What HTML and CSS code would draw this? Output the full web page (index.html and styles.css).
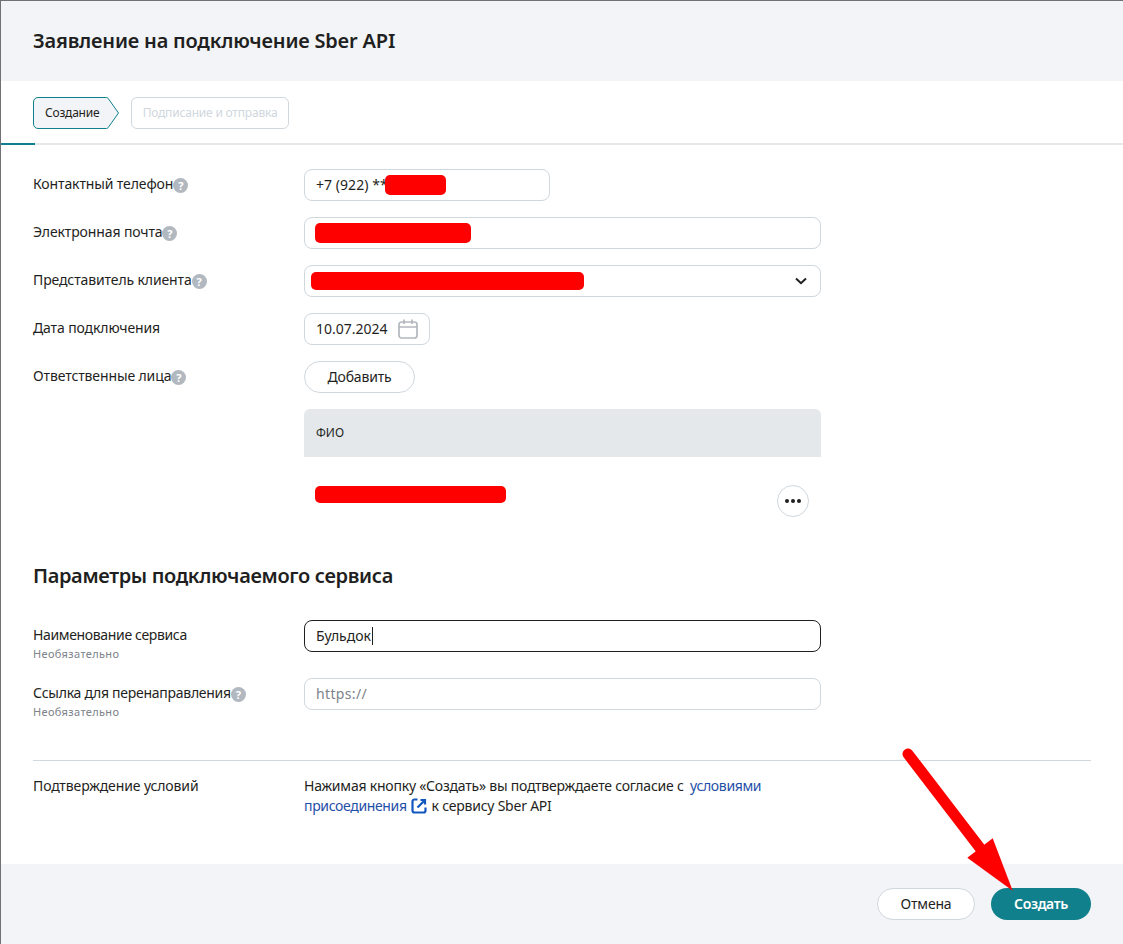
FILE: index.html
```html
<!DOCTYPE html>
<html lang="ru">
<head>
<meta charset="utf-8">
<title>Заявление на подключение Sber API</title>
<link rel="stylesheet" href="styles.css">
</head>
<body>
<div class="modal">
  <header class="head"><h1 class="title">Заявление на подключение Sber API</h1></header>
  <div class="tabs">
    <div class="step-active">
      <svg class="step-shape" width="87" height="32" viewBox="0 0 87 32"><path d="M5 .5H73.500a2 2 0 0 1 1.500.7L85.500 16 75 30.800a2 2 0 0 1-1.500.7H5A4.500 4.500 0 0 1 .5 27V5A4.500 4.500 0 0 1 5 .5Z" fill="#f2f4f7" stroke="#10808c"/></svg>
      <span class="step-text">Создание</span>
    </div>
    <div class="step-next">Подписание и отправка</div>
  </div>
  <main class="form">
    <div class="row">
      <div class="label">Контактный телефон<span class="hint">?</span></div>
      <div class="field w246"><span class="val phone">+7 (922) **</span><span class="blot b-phone"></span></div>
    </div>
    <div class="row">
      <div class="label">Электронная почта<span class="hint">?</span></div>
      <div class="field w517"><span class="blot b-mail"></span></div>
    </div>
    <div class="row">
      <div class="label">Представитель клиента<span class="hint">?</span></div>
      <div class="field w517 sel"><span class="blot b-rep"></span>
        <svg class="chev" width="12" height="8" viewBox="0 0 12 8"><path d="M1 1.500 6 6.200 11 1.500" fill="none" stroke="#1f1f22" stroke-width="2"/></svg>
      </div>
    </div>
    <div class="row">
      <div class="label">Дата подключения</div>
      <div class="field w126"><span class="val">10.07.2024</span>
        <svg class="cal" width="20" height="20" viewBox="0 0 20 20" fill="none" stroke="#b2b8bf" stroke-width="1.700"><rect x="1" y="3" width="18" height="16" rx="2.500"/><path d="M1 8H19M6 .5V5M14 .5V5"/></svg>
      </div>
    </div>
    <div class="row">
      <div class="label">Ответственные лица<span class="hint">?</span></div>
      <button class="btn add">Добавить</button>
    </div>
    <div class="table">
      <div class="thead">ФИО</div>
      <div class="trow"><span class="blot b-name"></span>
        <span class="more"><i></i><i></i><i></i></span>
      </div>
    </div>
    <h2 class="section">Параметры подключаемого сервиса</h2>
    <div class="row">
      <div class="label"><span class="narrow">Наименование сервиса</span><div class="opt">Необязательно</div></div>
      <div class="field w517 focus"><span class="val">Бульдок</span><span class="caret"></span></div>
    </div>
    <div class="row">
      <div class="label"><span class="tight">Ссылка для перенаправления</span><span class="hint">?</span><div class="opt">Необязательно</div></div>
      <div class="field w517"><span class="ph">https://</span></div>
    </div>
    <div class="terms">
      <div class="label">Подтверждение условий</div>
      <p class="terms-text">Нажимая кнопку «Создать» вы подтверждаете согласие с <a class="link first">условиями</a> <a class="link">присоединения</a> <svg class="ext" width="16" height="16" viewBox="0 0 16 16" fill="none" stroke="#1358bf" stroke-width="2.200"><path d="M6.500 1.500H3.500A2 2 0 0 0 1.500 3.500V12.500A2 2 0 0 0 3.500 14.500H12.500A2 2 0 0 0 14.500 12.500V9.500"/><path d="M9.500 2H14V6.500M13.800 2.200 6.500 9.500"/></svg> к сервису Sber API</p>
    </div>
  </main>
  <footer class="foot">
    <button class="btn cancel">Отмена</button>
    <button class="btn create">Создать</button>
  </footer>
</div>
<svg class="arrow" width="125" height="150" viewBox="0 0 125 150"><path d="M8 6 80 100" stroke="#f00" stroke-width="11" stroke-linecap="round" fill="none"/><path d="M67.300 109.700 92.700 90.300 112.700 142.700Z" fill="#f00"/></svg>
</body>
</html>
```
FILE: styles.css
```css
* { box-sizing: border-box; }
html, body { margin: 0; padding: 0; }
body {
  position: relative;
  width: 1123px;
  height: 944px;
  overflow: hidden;
  background: #6f7173;
  padding: 1px 0 0 1px;
  font-family: "Noto Sans", "Liberation Sans", sans-serif;
  font-size: 14px;
  color: #1f1f22;
}
.modal { display: flex; flex-direction: column; height: 943px; background: #fff; }
.head { height: 80px; background: #f2f4f7; padding: 0 32px; display: flex; align-items: center; }
.title { margin: 0; font-size: 20px; font-weight: 600; line-height: 28px; letter-spacing: -.2px; color: #1f1f22; }
.tabs {
  height: 64px; padding: 16px 32px 0; display: flex; gap: 11px;
  border-bottom: 2px solid #e4e8eb; position: relative;
}
.tabs::after { content: ""; position: absolute; left: 0; bottom: -2px; width: 34px; height: 2px; background: #10808c; }
.step-active { position: relative; width: 87px; height: 32px; display: flex; align-items: center; padding-left: 12px; }
.step-shape { position: absolute; left: 0; top: 0; }
.step-text { position: relative; font-size: 12px; line-height: 16px; letter-spacing: -.2px; }
.step-next {
  width: 158px; height: 32px; border: 1px solid #d0d7dd; border-radius: 6px;
  font-size: 12px; line-height: 30px; text-align: center; color: #d0d7dd; letter-spacing: -.2px;
}
.form { flex: 1; padding: 24px 32px 0; }
.row { display: flex; align-items: flex-start; margin-bottom: 16px; }
.label { width: 271px; flex: none; line-height: 20px; padding-top: 5px; color: #1f1f22; letter-spacing: -.12px; }
.narrow { letter-spacing: -.35px; }
.tight { letter-spacing: -.27px; }
.hint {
  display: inline-block; width: 15px; height: 15px; border-radius: 50%; background: #b2b8bf; color: #fff;
  font-size: 11px; font-weight: 700; line-height: 15px; text-align: center; vertical-align: -1px; letter-spacing: 0;
}
.opt { font-size: 11px; line-height: 16px; color: #7d838a; margin-top: 1px; letter-spacing: .35px; }
.field {
  height: 32px; border: 1px solid #d0d7dd; border-radius: 8px; background: #fff;
  display: flex; align-items: center; padding-left: 11px; position: relative;
}
.w246 { width: 246px; }
.w517 { width: 517px; }
.w126 { width: 126px; justify-content: space-between; padding-right: 11px; }
.val { line-height: 20px; white-space: pre; }
.phone { letter-spacing: .05px; }
.ph { color: #7d838a; letter-spacing: .35px; margin-bottom: 2px; }
.blot { display: inline-block; background: #f00; border-radius: 5px; height: 20px; }
.b-phone { width: 61px; margin-left: -3px; }
.b-mail { width: 156px; margin-left: -1px; }
.b-rep { width: 273px; height: 18px; margin-left: -5px; }
.b-name { width: 191px; height: 17px; margin-top: 1px; }
.sel { justify-content: space-between; padding-right: 13px; }
.focus { border-color: #1f1f22; }
.caret { width: 1px; height: 18px; background: #1f1f22; margin-left: 1px; }
.btn { font-family: inherit; font-size: 14px; height: 32px; border-radius: 16px; line-height: 20px; padding: 0; cursor: pointer; letter-spacing: -.2px; }
.add { width: 111px; background: #fff; border: 1px solid #d0d7dd; color: #1f1f22; }
.table { margin: 0 0 0 271px; width: 517px; }
.thead { height: 48px; background: #e4e8eb; border-radius: 6px 6px 0 0; padding: 0 12px; font-size: 12px; line-height: 48px; color: #1f1f22; }
.trow { height: 73px; padding: 28px 12px 0 11px; display: flex; justify-content: space-between; align-items: flex-start; }
.more { width: 32px; height: 32px; border: 1px solid #d0d7dd; border-radius: 50%; display: flex; align-items: center; justify-content: center; gap: 2px; }
.more i { width: 4px; height: 4px; border-radius: 50%; background: #1f1f22; }
.section { margin: 32px 0 30px; font-size: 20px; line-height: 28px; font-weight: 600; letter-spacing: -.34px; }
.terms { display: flex; border-top: 1px solid #d0d7dd; margin-top: 40px; padding-top: 10px; }
.terms-text { margin: 0; width: 470px; line-height: 20px; padding-top: 5px; letter-spacing: -.22px; }
.link { color: #1f4fa8; letter-spacing: -.35px; }
.first { margin-left: 3px; }
.ext { vertical-align: -3px; margin: 0 1px; }
.foot { height: 80px; background: #f2f4f7; padding: 24px 32px 0 0; display: flex; justify-content: flex-end; gap: 16px; }
.cancel { width: 98px; background: #fff; border: 1px solid #d0d7dd; color: #1f1f22; }
.create { width: 100px; background: #10808c; border: 0; color: #fff; font-weight: 600; letter-spacing: -.35px; }
.arrow { position: absolute; left: 900px; top: 748px; }
```
